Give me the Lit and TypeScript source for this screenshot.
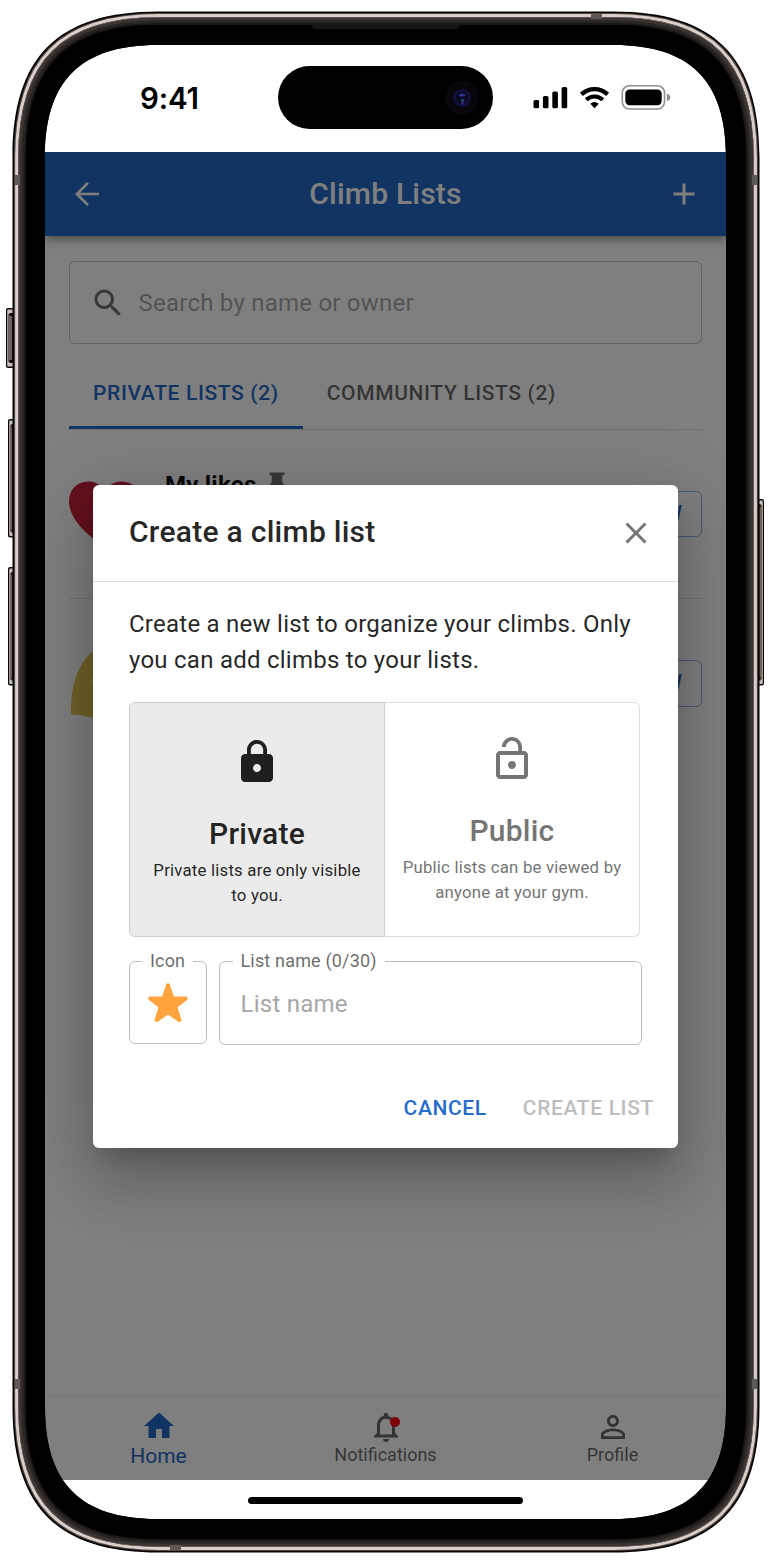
import { LitElement, html, css, svg } from "lit";
import { customElement, property } from "lit/decorators.js";

/** Continuous-corner rectangle used for every layer of the device shell. */
function shell(x: number, y: number, w: number, h: number, l: number, k = 0.69): string {
  const c = l * (1 - k);
  const r = x + w;
  const b = y + h;
  return (
    `M${x + l} ${y}H${r - l}C${r - c} ${y} ${r} ${y + c} ${r} ${y + l}` +
    `V${b - l}C${r} ${b - c} ${r - c} ${b} ${r - l} ${b}` +
    `H${x + l}C${x + c} ${b} ${x} ${b - c} ${x} ${b - l}` +
    `V${y + l}C${x} ${y + c} ${x + c} ${y} ${x + l} ${y}Z`
  );
}

const OUTER = { x: 12.5, y: 11.5, w: 747, h: 1541, l: 146 };
const SCREEN = shell(45, 45, 681, 1474, 112, 0.68);

function layer(inset: number): string {
  return shell(
    OUTER.x + inset,
    OUTER.y + inset,
    OUTER.w - inset * 2,
    OUTER.h - inset * 2,
    OUTER.l - inset * 1.05
  );
}

@customElement("device-frame")
export class DeviceFrame extends LitElement {
  static styles = css`
    :host { display: block; }
    svg { display: block; width: 771px; height: 1564px; }
  `;

  private button(x: number, y: number, h: number, w: number, flip = false) {
    return svg`
      <g transform=${flip ? `translate(${2 * x + w} 0) scale(-1 1)` : ""}>
        <rect x=${x} y=${y} width=${w} height=${h} rx="2" fill="#0b0908"></rect>
        <rect x=${x + 1.2} y=${y + 1.5} width=${w - 1.2} height=${h - 3} rx="1" fill="#c9bfb8"></rect>
        <rect x=${x + 2} y=${y + 6} width=${w - 2} height=${h - 12} fill="#6b625d"></rect>
        <rect x=${x + 3.4} y=${y + 5} width=${w - 3.4} height="3" fill="#0b0908"></rect>
        <rect x=${x + 3.4} y=${y + h - 8} width=${w - 3.4} height="3" fill="#0b0908"></rect>
        <rect x=${x + w - 2} y=${y + 6} width="1.6" height=${h - 12} fill="#1d1a18"></rect>
      </g>`;
  }

  render() {
    return html`<svg viewBox="0 0 771 1564" aria-hidden="true">
      ${this.button(6, 308, 60, 8)}
      ${this.button(8, 419, 118.5, 6)}
      ${this.button(8, 567, 118.5, 6)}
      ${this.button(757.5, 499, 186.5, 6.5, true)}
      <path fill="#050403" fill-rule="evenodd" d=${layer(0) + SCREEN}></path>
      <path fill="none" stroke="#4d4643" stroke-width="1.4" d=${layer(2.2)}></path>
      <path fill="none" stroke="#d9cec8" stroke-width="3.2" d=${layer(4.2)}></path>
      <path fill="none" stroke="#6b625d" stroke-width="1.2" d=${layer(6.2)}></path>
      <path fill="none" stroke="#3b3532" stroke-width="3.4" d=${layer(8)}></path>
      <path fill="none" stroke="#292523" stroke-width="3" d=${layer(10.6)}></path>
      <path fill="none" stroke="#1a1716" stroke-width="1.6" d=${layer(12.6)}></path>
      <path fill="#000" fill-rule="evenodd" d=${layer(13.6) + SCREEN}></path>
      <path fill="#171513" d="M312 25H460V26.5Q459 29 456 29H316Q313 29 312 26.5Z"></path>
      <g fill="#5f5853">
        <rect x="15" y="175" width="5" height="10"></rect>
        <rect x="752" y="175" width="5" height="10"></rect>
        <rect x="15" y="1379" width="5" height="10"></rect>
        <rect x="752" y="1379" width="5" height="10"></rect>
        <rect x="591" y="13.5" width="11" height="5.5"></rect>
        <rect x="170" y="1545" width="11" height="5.5"></rect>
      </g>
    </svg>`;
  }
}

@customElement("status-bar")
export class StatusBar extends LitElement {
  static styles = css`
    :host {
      box-sizing: border-box;
      display: grid;
      grid-template-columns: 232.75px 215.5px 1fr;
      align-items: center;
      height: 107.4px;
      padding: 20.9px 0 23px;
      background: #fff;
    }
    .time {
      padding-left: 95px;
      font: 600 29.5px/36px Inter, sans-serif;
      letter-spacing: -0.15px;
      color: #000;
    }
    .island {
      display: flex;
      justify-content: flex-end;
      align-items: center;
      height: 63.5px;
      padding-right: 14px;
      box-sizing: border-box;
      border-radius: 32px;
      background: #000;
    }
    .signals { display: block; margin-left: 39.5px; }
  `;

  render() {
    return html`
      <span class="time">9:41</span>
      <div class="island">
        <svg width="34" height="34" viewBox="0 0 34 34">
          <circle cx="17" cy="17" r="17" fill="#08050c"></circle>
          <circle cx="17" cy="17" r="9" fill="#10103a"></circle>
          <circle cx="17" cy="17" r="6" fill="#090920"></circle>
          <ellipse cx="17" cy="14" rx="3.2" ry="1.6" fill="#30308a"></ellipse>
          <circle cx="17.5" cy="19.5" r="1.8" fill="#1c4468"></circle>
          <circle cx="17.5" cy="22.2" r="1.2" fill="#46207a"></circle>
        </svg>
      </div>
      <svg class="signals" width="138" height="25" viewBox="532.5 84 138 25">
        <rect x="533" y="99" width="5.6" height="8.2" rx="1.5"></rect>
        <rect x="542.4" y="95" width="5.6" height="12.2" rx="1.5"></rect>
        <rect x="551.8" y="90.5" width="5.6" height="16.7" rx="1.5"></rect>
        <rect x="561.1" y="86" width="5.6" height="21.2" rx="1.5"></rect>
        <path fill="none" stroke="#000" stroke-width="4.3" d="M580.9 93.4A18.8 18.8 0 0 1 607.1 93.4"></path>
        <path fill="none" stroke="#000" stroke-width="4" d="M585.7 98.8A12 12 0 0 1 602.3 98.8"></path>
        <path d="M589.8 102.8Q594 99.3 598.2 102.8L594 107.2Z"></path>
        <rect x="621.8" y="84.8" width="42.2" height="23.2" rx="7" fill="none" stroke="#8f8f8f" stroke-width="1.6"></rect>
        <rect x="624.8" y="88.4" width="36.4" height="15.9" rx="4.2"></rect>
        <path fill="#8f8f8f" d="M666.3 92.6Q669.8 94 669.8 96.4Q669.8 98.8 666.3 100.2Z"></path>
      </svg>
    `;
  }
}

const ICONS: Record<string, string> = {
  back: "M20 11.1H7.4l5.9-5.9L12 4l-8 8 8 8 1.3-1.2-5.9-5.9H20z",
  plus: "M19 13h-6v6h-2v-6H5v-2h6V5h2v6h6z",
  search:
    "M15.5 14h-.79l-.28-.27C15.41 12.59 16 11.11 16 9.5 16 5.91 13.09 3 9.5 3S3 5.91 3 9.5 5.91 16 9.5 16c1.61 0 3.09-.59 4.23-1.57l.27.28v.79l5 4.99L20.49 19zm-6 0C7.01 14 5 11.99 5 9.5S7.01 5 9.5 5 14 7.01 14 9.5 11.99 14 9.5 14",
  pin: "M18 2v2.2h-1.8v4.6c0 1.9 1.2 2.8 2.8 3.6v2h-6v7l-1 1-1-1v-7H5v-2c1.6-.8 2.8-1.7 2.8-3.6V4.2H6V2z",
  close:
    "M19 6.41 17.59 5 12 10.59 6.41 5 5 6.41 10.59 12 5 17.59 6.41 19 12 13.41 17.59 19 19 17.59 13.41 12z",
  lock:
    "M18 8h-1V6c0-2.76-2.24-5-5-5S7 3.24 7 6v2H6c-1.1 0-2 .9-2 2v10c0 1.1.9 2 2 2h12c1.1 0 2-.9 2-2V10c0-1.1-.9-2-2-2m-6 9c-1.1 0-2-.9-2-2s.9-2 2-2 2 .9 2 2-.9 2-2 2m3.1-9H8.9V6c0-1.71 1.39-3.1 3.1-3.1s3.1 1.39 3.1 3.1z",
  unlock:
    "M12 17c1.1 0 2-.9 2-2s-.9-2-2-2-2 .9-2 2 .9 2 2 2m6-9h-1V6c0-2.76-2.24-5-5-5S7 3.24 7 6h1.9c0-1.71 1.39-3.1 3.1-3.1s3.1 1.39 3.1 3.1v2H6c-1.1 0-2 .9-2 2v10c0 1.1.9 2 2 2h12c1.1 0 2-.9 2-2V10c0-1.1-.9-2-2-2m0 12H6V10h12z",
  home: "M10 20v-6h4v6h5v-8h3L12 3 2 12h3v8z",
  bell:
    "M12 22c1.1 0 2-.9 2-2h-4c0 1.1.9 2 2 2m6-6v-5c0-3.07-1.63-5.64-4.5-6.32V4c0-.83-.67-1.5-1.5-1.5s-1.5.67-1.5 1.5v.68C7.64 5.36 6 7.92 6 11v5l-2 2v1h16v-1zm-2 1H8v-6c0-2.48 1.51-4.5 4-4.5s4 2.02 4 4.5z",
  person:
    "M12 5.9c1.16 0 2.1.94 2.1 2.1s-.94 2.1-2.1 2.1S9.9 9.16 9.9 8s.94-2.1 2.1-2.1m0 9c2.97 0 6.1 1.46 6.1 2.1v1.1H5.9V17c0-.64 3.13-2.1 6.1-2.1M12 4C9.79 4 8 5.79 8 8s1.79 4 4 4 4-1.79 4-4-1.79-4-4-4m0 9c-2.67 0-8 1.34-8 4v3h16v-3c0-2.66-5.33-4-8-4",
};

@customElement("md-icon")
export class MdIcon extends LitElement {
  @property() name = "";
  static styles = css`
    :host { display: block; flex: none; width: 36px; height: 36px; }
    svg { display: block; width: 100%; height: 100%; fill: currentColor; }
  `;
  render() {
    return html`<svg viewBox="0 0 24 24"><path d=${ICONS[this.name] ?? ""}></path></svg>`;
  }
}

@customElement("lists-page")
export class ListsPage extends LitElement {
  static styles = css`
    :host {
      display: flex;
      flex-direction: column;
      height: 100%;
      background: #fff;
      color: rgba(0, 0, 0, 0.87);
    }
    .bar {
      box-sizing: border-box;
      display: grid;
      grid-template-columns: 36px 1fr 36px;
      align-items: center;
      height: 84px;
      padding: 0 24px;
      background: #2468c4;
      color: #fff;
      box-shadow: 0 3px 6px -1.5px rgba(0, 0, 0, 0.2), 0 6px 7.5px rgba(0, 0, 0, 0.14),
        0 1.5px 15px rgba(0, 0, 0, 0.12);
    }
    .bar h1 { margin: 0; text-align: center; font-size: 30px; font-weight: 500; line-height: 48px; letter-spacing: 0.225px; }
    .body { flex: 1; padding: 24.4px 24px 0; }
    .search {
      box-sizing: border-box;
      display: flex;
      align-items: center;
      gap: 12.5px;
      height: 83.3px;
      padding: 1px 20px 0;
      border: 1.5px solid rgba(0, 0, 0, 0.23);
      border-radius: 6px;
      font-size: 24px;
      letter-spacing: 0.235px;
    }
    .search md-icon { color: rgba(0, 0, 0, 0.56); }
    .placeholder { color: rgba(0, 0, 0, 0.37); }
    .tabs { display: flex; height: 72px; margin-top: 13px; border-bottom: 1.5px solid rgba(0, 0, 0, 0.12); }
    .tab {
      box-sizing: border-box;
      height: 72px;
      padding: 0 24px;
      border-bottom: 3px solid transparent;
      font-size: 21px;
      font-weight: 500;
      line-height: 72px;
      letter-spacing: 0.63px;
      white-space: nowrap;
      color: rgba(0, 0, 0, 0.6);
    }
    .tab.on { color: #2468c4; border-color: #2468c4; }
    .row {
      box-sizing: border-box;
      display: grid;
      grid-template-columns: 72px 1fr auto;
      column-gap: 24px;
      align-items: center;
      height: 169.3px;
      border-bottom: 1.5px solid rgba(0, 0, 0, 0.12);
    }
    .row.last { border-bottom-color: transparent; }
    .emoji { width: 72px; height: 72px; }
    .name { display: flex; align-items: center; gap: 6px; height: 36px; margin-bottom: 59px; font-size: 24px; font-weight: 700; letter-spacing: 0.225px; color: #111; }
    .name md-icon { width: 30px; height: 30px; color: rgba(0, 0, 0, 0.56); }
    .view {
      box-sizing: border-box;
      height: 46.5px;
      padding: 0 18.5px 0 19px;
      border: 1.5px solid rgba(36, 104, 196, 0.5);
      border-radius: 6px;
      font-size: 19.5px;
      font-weight: 500;
      line-height: 44.5px;
      letter-spacing: 0.6px;
      color: #2468c4;
    }
    .nav { display: grid; grid-template-columns: repeat(3, 1fr); height: 84px; border-top: 1.5px solid rgba(0, 0, 0, 0.05); }
    .item { display: flex; flex-direction: column; align-items: center; padding-top: 13.5px; font-size: 18px; line-height: 20px; color: rgba(0, 0, 0, 0.6); }
    .item.on { padding-top: 12.5px; font-size: 21px; line-height: 24px; color: #2468c4; }
    .icon { position: relative; }
    .dot { position: absolute; left: 22px; top: 8px; width: 10px; height: 10px; border-radius: 50%; background: #f90010; }
  `;

  render() {
    return html`
      <header class="bar">
        <md-icon name="back"></md-icon>
        <h1>Climb Lists</h1>
        <md-icon name="plus"></md-icon>
      </header>
      <main class="body">
        <div class="search">
          <md-icon name="search"></md-icon>
          <span class="placeholder">Search by name or owner</span>
        </div>
        <div class="tabs">
          <div class="tab on">PRIVATE LISTS (2)</div>
          <div class="tab">COMMUNITY LISTS (2)</div>
        </div>
        <div class="row">
          <svg class="emoji" viewBox="0 0 72 72">
            <path fill="#c8233a" d="M36 14C32 6 26 3.5 19 3.5C8 3.5 0 12 0 23.5C0 40 17 57 36 69C55 57 72 40 72 23.5C72 12 64 3.5 53 3.5C46 3.5 40 6 36 14Z"></path>
          </svg>
          <div class="name"><span>My likes</span><md-icon name="pin"></md-icon></div>
          <div class="view">VIEW</div>
        </div>
        <div class="row last">
          <svg class="emoji" viewBox="0 0 72 72">
            <path fill="#e2c253" d="M2 64C2 36 9 16 24 3C46 -4 70 22 71 52V67C48 72 30 71 15 68Q9 66 4 67Q2 67 2 64Z"></path>
            <ellipse cx="29.5" cy="33" rx="6.5" ry="9" fill="#f5f1df"></ellipse>
          </svg>
          <span></span>
          <div class="view">VIEW</div>
        </div>
      </main>
      <nav class="nav">
        <div class="item on"><md-icon name="home"></md-icon>Home</div>
        <div class="item">
          <div class="icon"><md-icon name="bell"></md-icon><i class="dot"></i></div>
          Notifications
        </div>
        <div class="item"><md-icon name="person"></md-icon>Profile</div>
      </nav>
    `;
  }
}

@customElement("create-dialog")
export class CreateDialog extends LitElement {
  static styles = css`
    :host {
      box-sizing: border-box;
      display: flex;
      flex-direction: column;
      width: 585px;
      height: 663px;
      border-radius: 6px;
      background: #fff;
      color: rgba(0, 0, 0, 0.87);
      box-shadow: 0 16.5px 22.5px -10.5px rgba(0, 0, 0, 0.2), 0 36px 57px 4.5px rgba(0, 0, 0, 0.14),
        0 13.5px 69px 12px rgba(0, 0, 0, 0.12);
    }
    .head {
      display: flex;
      align-items: center;
      justify-content: space-between;
      height: 96px;
      padding: 0 24px 0 36px;
      border-bottom: 1.5px solid rgba(0, 0, 0, 0.14);
    }
    h2, h3, p { margin: 0; }
    h2 { font-size: 30px; font-weight: 500; line-height: 48px; letter-spacing: 0.27px; margin-bottom: 1px; }
    .head md-icon { color: #757575; }
    .content { flex: 1; padding: 24.5px 36px 0; }
    .intro { font-size: 24px; line-height: 36px; letter-spacing: 0.25px; white-space: nowrap; }
    .choices { display: grid; grid-template-columns: 256px 255px; height: 235px; margin-top: 24px; width: 511px; }
    .choice {
      box-sizing: border-box;
      display: flex;
      flex-direction: column;
      align-items: center;
      padding-top: 32px;
      border: 1.5px solid #dedede;
      text-align: center;
      color: #757575;
    }
    .choice.on { padding-top: 35px; border-color: #cecece; border-radius: 6px 0 0 6px; background: #ebebeb; color: rgba(0, 0, 0, 0.87); }
    .choice.off { border-left: 0; border-radius: 0 6px 6px 0; }
    .choice md-icon { width: 48px; height: 48px; }
    h3 { margin-top: 24px; font-size: 30px; font-weight: 500; line-height: 48px; letter-spacing: 0.225px; }
    .choice p { font-size: 16.8px; line-height: 24.6px; letter-spacing: 0.2px; white-space: nowrap; }
    .fields { display: flex; align-items: flex-start; gap: 12px; margin-top: 12px; }
    fieldset {
      box-sizing: border-box;
      display: flex;
      margin: 0;
      min-width: 0;
      border: 1.5px solid rgba(0, 0, 0, 0.26);
      border-radius: 6px;
    }
    legend { padding: 0 8px; font-size: 18px; line-height: 24px; letter-spacing: 0.17px; color: rgba(0, 0, 0, 0.6); white-space: nowrap; }
    .pick { width: 78px; height: 94.5px; padding: 0 0 0 12px; }
    .pick svg { display: block; margin: 8.5px 0 0 5px; width: 42px; height: 42px; }
    .text { flex: 1; height: 95.5px; padding: 0 12.5px; }
    .text span { padding: 12.5px 0 0 8px; font-size: 24px; line-height: 36px; letter-spacing: 0.25px; color: #a7a7a7; }
    .actions { display: flex; justify-content: flex-end; gap: 12px; padding: 12px; }
    .btn { padding: 9px 12px; font-size: 21px; font-weight: 500; line-height: 36.75px; letter-spacing: 0.64px; color: #246bcb; }
    .btn.disabled { color: #bdbdbd; }
  `;

  render() {
    return html`
      <div class="head"><h2>Create a climb list</h2><md-icon name="close"></md-icon></div>
      <div class="content">
        <p class="intro">Create a new list to organize your climbs. Only<br />you can add climbs to your lists.</p>
        <div class="choices">
          <div class="choice on">
            <md-icon name="lock"></md-icon>
            <h3>Private</h3>
            <p>Private lists are only visible<br />to you.</p>
          </div>
          <div class="choice off">
            <md-icon name="unlock"></md-icon>
            <h3>Public</h3>
            <p>Public lists can be viewed by<br />anyone at your gym.</p>
          </div>
        </div>
        <div class="fields">
          <fieldset class="pick">
            <legend>Icon</legend>
            <svg viewBox="0 0 42 42">
              <path fill="#ffa33c" stroke="#ffa33c" stroke-width="4" stroke-linejoin="round"
                d="M21 3.2L25.3 16.2L38.8 16.5L28.2 24.7L32.4 38L21 30.3L9.6 38L13.8 24.7L3.2 16.5L16.7 16.2Z"></path>
            </svg>
          </fieldset>
          <fieldset class="text">
            <legend>List name (0/30)</legend>
            <span>List name</span>
          </fieldset>
        </div>
      </div>
      <div class="actions">
        <div class="btn">CANCEL</div>
        <div class="btn disabled">CREATE LIST</div>
      </div>
    `;
  }
}

@customElement("app-root")
export class AppRoot extends LitElement {
  static styles = css`
    :host {
      position: relative;
      box-sizing: border-box;
      display: block;
      width: 771px;
      height: 1564px;
      padding: 45px;
      overflow: hidden;
      background: #fff;
      font-family: Roboto, sans-serif;
    }
    .app { position: relative; height: 1327.6px; overflow: hidden; }
    .backdrop { position: absolute; inset: 0; display: grid; place-items: center; background: rgba(0, 0, 0, 0.5); }
    .foot { display: flex; justify-content: center; width: 681px; height: 39px; padding-top: 17px; box-sizing: border-box; }
    .grip { width: 275px; height: 7.5px; margin-right: 1px; border-radius: 4px; background: #000; }
    .frame { position: absolute; inset: 0; pointer-events: none; }
  `;

  render() {
    return html`
      <status-bar></status-bar>
      <div class="app">
        <lists-page></lists-page>
        <div class="backdrop"><create-dialog></create-dialog></div>
      </div>
      <div class="foot"><div class="grip"></div></div>
      <device-frame class="frame"></device-frame>
    `;
  }
}
